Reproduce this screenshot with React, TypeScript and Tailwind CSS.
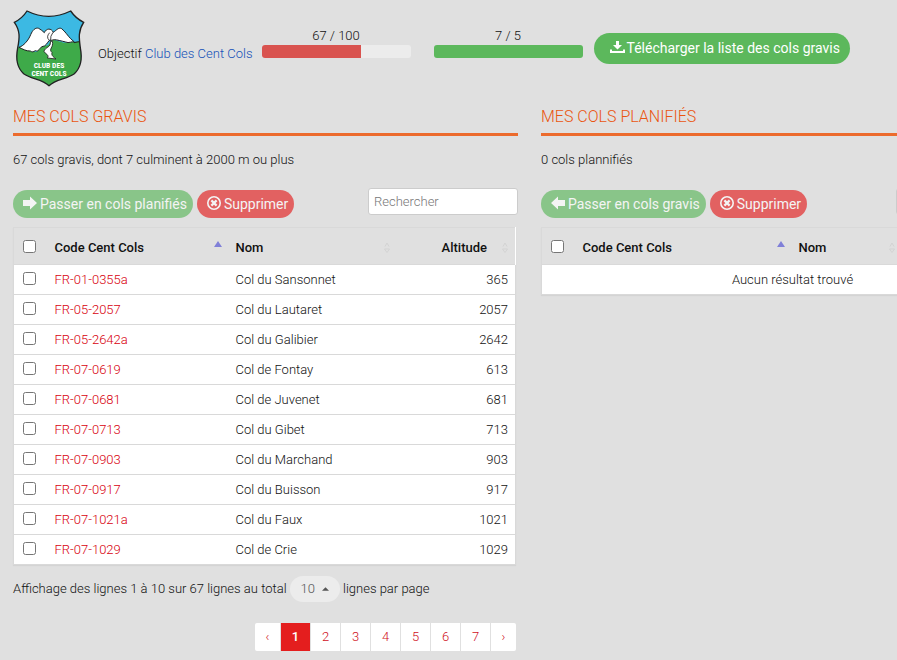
import React, { useState } from 'react';

interface Col {
  code: string;
  name: string;
  altitude: number;
}

const CLIMBED: Col[] = [
  { code: 'FR-01-0355a', name: 'Col du Sansonnet', altitude: 365 },
  { code: 'FR-05-2057', name: 'Col du Lautaret', altitude: 2057 },
  { code: 'FR-05-2642a', name: 'Col du Galibier', altitude: 2642 },
  { code: 'FR-07-0619', name: 'Col de Fontay', altitude: 613 },
  { code: 'FR-07-0681', name: 'Col de Juvenet', altitude: 681 },
  { code: 'FR-07-0713', name: 'Col du Gibet', altitude: 713 },
  { code: 'FR-07-0903', name: 'Col du Marchand', altitude: 903 },
  { code: 'FR-07-0917', name: 'Col du Buisson', altitude: 917 },
  { code: 'FR-07-1021a', name: 'Col du Faux', altitude: 1021 },
  { code: 'FR-07-1029', name: 'Col de Crie', altitude: 1029 },
];

const Logo = () => (
  <svg viewBox="24 20 216 231" className="h-[77px] w-[72px] shrink-0" role="img" aria-label="Club des Cent Cols">
    <defs>
      <clipPath id="shield">
        <path d="M66 23Q131 55 197 23Q212 45 236 57C219 82 222 104 226 134C233 170 227 194 208 211C185 228 153 226 132 247C111 226 79 228 56 211C37 194 31 170 38 134C44 104 46 82 28 57Q52 45 66 23Z" />
      </clipPath>
    </defs>
    <g clipPath="url(#shield)">
      <path d="M20 15H245V255H20Z" fill="#3cb9e3" />
      <path d="M36 133L58 125L74 143L95 146L107 131L130 125L140 108L176 118L205 116L245 112V255H20Z" fill="#3eaa49" />
      <path
        d="M42 132C55 128 70 112 77 94C83 80 91 72 101 75C108 79 113 83 118 88C124 74 139 74 145 87C154 81 161 71 170 76C181 85 188 97 197 106L208 116C200 113 192 121 182 116C169 113 155 109 148 109C142 111 137 111 133 111C126 118 124 129 111 130C104 133 101 147 91 142C84 146 82 147 76 143C64 144 53 137 42 132Z"
        fill="#fff"
        stroke="#222"
        strokeWidth="3"
      />
      <path d="M134 88Q122 101 133 111M144 87Q135 99 137 110" fill="none" stroke="#222" strokeWidth="2.5" />
      <path d="M136 114C140 132 119 132 117 144C119 151 135 155 127 164L153 167C142 159 139 155 141 147C129 138 147 132 142 114Z" fill="#fff" stroke="#222" strokeWidth="2.5" />
      <path d="M207 118Q219 115 232 114" fill="none" stroke="#222" strokeWidth="3" />
    </g>
    <path
      d="M66 23Q131 55 197 23Q212 45 236 57C219 82 222 104 226 134C233 170 227 194 208 211C185 228 153 226 132 247C111 226 79 228 56 211C37 194 31 170 38 134C44 104 46 82 28 57Q52 45 66 23Z"
      fill="none"
      stroke="#222"
      strokeWidth="4"
    />
    <g fill="#fff" textAnchor="middle" fontWeight="700" fontSize="23" fontFamily="'Liberation Sans Narrow', 'Roboto Condensed', Roboto, sans-serif">
      <text x="132" y="193">CLUB DES</text>
      <text x="132" y="217">CENT COLS</text>
    </g>
  </svg>
);

const SaveIcon = () => (
  <svg viewBox="0 0 15 14" className="mb-[3px] h-[14px] w-[15px]" fill="currentColor" aria-hidden="true">
    <path d="M6 1h3v4h3L7.500 9.500 3 5h3zM0 9.500h2V11h11V9.500h2V13H0z" />
  </svg>
);

const ArrowIcon = ({ left = false }: { left?: boolean }) => (
  <svg viewBox="0 0 14 14" className="mb-[2px] h-[14px] w-[14px]" fill="currentColor" aria-hidden="true">
    <path d={left ? 'M0 7L7 0.500V4h7v6H7v3.500z' : 'M14 7L7 0.500V4H0v6h7v3.500z'} />
  </svg>
);

const RemoveIcon = () => (
  <svg viewBox="0 0 14 14" className="mb-[2px] h-[14px] w-[14px]" fill="none" stroke="currentColor" aria-hidden="true">
    <circle cx="7" cy="7" r="6.200" strokeWidth="1.600" />
    <path d="M4.400 4.400l5.200 5.200M9.600 4.400l-5.200 5.200" strokeWidth="2.200" />
  </svg>
);

const SortIcon = () => (
  <svg viewBox="0 0 6 12" className="h-[12px] w-[6px]" fill="none" stroke="#d3d3d3" aria-hidden="true">
    <path d="M1 4.500L3 1l2 3.500M0.500 7h5L3 10.500z" strokeWidth="1" />
  </svg>
);

const AscIcon = () => (
  <svg viewBox="0 0 8 6" className="mb-[7px] h-[6px] w-[8px]" fill="#8080d8" aria-hidden="true">
    <path d="M4 0l4 6H0z" />
  </svg>
);

interface ProgressProps {
  label: string;
  value: number;
  barClass: string;
}

const Progress: React.FC<ProgressProps> = ({ label, value, barClass }) => (
  <div className="w-[149px] text-center">
    <div className="leading-[18px]">{label}</div>
    <div role="progressbar" aria-label={label} aria-valuenow={value} className="h-[13px] overflow-hidden rounded-[3px] bg-[#ececec]">
      <div className={`h-full ${barClass}`} style={{ width: `${value}%` }} />
    </div>
  </div>
);

interface PanelProps {
  title: string;
  summary: string;
  moveLabel: string;
  moveLeft?: boolean;
  cols: Col[];
  children?: React.ReactNode;
}

const CHECKBOX = 'block h-[13px] w-[13px]';
const PILL = 'flex h-[28px] items-center gap-[3px] rounded-full pr-[6px] pl-[10px] text-[14px] font-normal text-white opacity-65';

const Panel: React.FC<PanelProps> = ({ title, summary, moveLabel, moveLeft, cols, children }) => {
  const [search, setSearch] = useState('');
  const empty = cols.length === 0;

  return (
    <section>
      <h2 className="border-b-[3px] border-[#ec6b2d] pb-[6px] text-[16px] leading-[20px] text-[#ea5510] uppercase">{title}</h2>
      <p className="mt-[14px] leading-[20px]">{summary}</p>

      <div className="mt-[18px] flex items-start justify-between">
        <div className="flex gap-1 pt-[2px]">
          <button type="button" disabled className={`${PILL} bg-[#5cb85c]`}>
            <ArrowIcon left={moveLeft} />
            {moveLabel}
          </button>
          <button type="button" disabled className={`${PILL} bg-[#e41e1e]`}>
            <RemoveIcon />
            Supprimer
          </button>
        </div>
        <input
          type="text"
          aria-label="Rechercher"
          placeholder="Rechercher"
          value={search}
          onChange={(e) => setSearch(e.target.value)}
          className="h-[27px] w-[150px] rounded-[3px] border border-[#ccc] bg-white px-[5px] placeholder-[#777]"
        />
      </div>

      <div className="mt-[9px] mr-[2px]">
        <table className="w-full table-fixed border border-[#d9d9d9] shadow-[0_1px_1px_rgba(0,0,0,0.05)]">
          <colgroup>
            <col className="w-[34px]" />
            <col className={empty ? 'w-[216px]' : 'w-[181px]'} />
            <col className={empty ? 'w-[110px]' : 'w-[168px]'} />
            <col />
          </colgroup>
          <thead>
            <tr className="h-[37px] border-b border-[#d9d9d9] text-left">
              <th className="pl-[9px]">
                <input type="checkbox" aria-label="Tout sélectionner" className={CHECKBOX} />
              </th>
              <th className="px-[7px] pt-[3px] font-medium">
                <div className="flex items-center justify-between">
                  Code Cent Cols
                  <AscIcon />
                </div>
              </th>
              <th className="px-[7px] pt-[3px] font-medium">
                <div className="flex items-center justify-between">
                  Nom
                  <SortIcon />
                </div>
              </th>
              <th className="border-r border-white px-[7px] pt-[3px] font-medium">
                <div className="flex items-center justify-end gap-[15px]">
                  Altitude
                  <SortIcon />
                </div>
              </th>
            </tr>
          </thead>
          <tbody className="bg-white">
            {empty && (
              <tr className="h-[30px]">
                <td colSpan={4} className="text-center">
                  Aucun résultat trouvé
                </td>
              </tr>
            )}
            {cols.map((col) => (
              <tr key={col.code} className="h-[30px] border-b border-[#d9d9d9]">
                <td className="pb-[2px] pl-[9px]">
                  <input type="checkbox" aria-label={col.name} className={CHECKBOX} />
                </td>
                <td className="px-[7px]">
                  <a href={`#${col.code}`} className="text-[#d8000c]">
                    {col.code}
                  </a>
                </td>
                <td className="px-[7px]">{col.name}</td>
                <td className="px-[7px] text-right">{col.altitude}</td>
              </tr>
            ))}
          </tbody>
        </table>
        {children}
      </div>
    </section>
  );
};

const PAGES = ['1', '2', '3', '4', '5', '6', '7'];

const Pagination = () => (
  <nav aria-label="Pagination" className="mt-[21px] flex h-[28px] justify-end gap-px text-[#d0101c]">
    <a href="#prev" aria-label="Page précédente" className="flex w-[25px] items-center justify-center rounded-l-[2px] bg-white">
      ‹
    </a>
    {PAGES.map((page) => (
      <a
        key={page}
        href={`#page-${page}`}
        className={`flex w-[29px] items-center justify-center ${page === '1' ? 'bg-[#e41e1e] font-medium text-white' : 'bg-white'}`}
      >
        {page}
      </a>
    ))}
    <a href="#next" aria-label="Page suivante" className="flex w-[25px] items-center justify-center rounded-r-[2px] bg-white">
      ›
    </a>
  </nav>
);

export default function App() {
  return (
    <div className="min-h-screen overflow-x-hidden bg-[#e0e0e0] font-['Roboto',sans-serif] text-[13px] font-light text-[#111]">
      <div className="min-w-[1059px] px-[13px] pt-[10px]">
        <header className="flex items-start">
          <Logo />
          <p className="mt-[34px] ml-[13px] leading-[20px]">
            Objectif{' '}
            <a href="#club" className="text-[#1450b8]">
              Club des Cent Cols
            </a>
          </p>
          <div className="mt-[17px] ml-[9px] flex gap-[23px]">
            <Progress label="67 / 100" value={67} barClass="bg-[#d9534f]" />
            <Progress label="7 / 5" value={100} barClass="bg-[#5cb85c]" />
          </div>
          <button type="button" className="mt-[23px] ml-[11px] flex h-[31px] items-center gap-[2px] rounded-full bg-[#5cb85c] pr-[10px] pl-4 text-[14px] font-normal text-white">
            <SaveIcon />
            Télécharger la liste des cols gravis
          </button>
        </header>

        <main className="mt-5 grid grid-cols-2 gap-[23px]">
          <Panel title="Mes cols gravis" summary="67 cols gravis, dont 7 culminent à 2000 m ou plus" moveLabel="Passer en cols planifiés" cols={CLIMBED}>
            <div className="mt-[11px] flex items-center gap-[3px]">
              <span>Affichage des lignes 1 à 10 sur 67 lignes au total</span>
              <button type="button" className="flex h-[26px] items-center gap-[7px] rounded-full bg-[#ececec] px-[11px] text-[#555]">
                10
                <svg viewBox="0 0 8 4" className="h-[4px] w-[7px]" fill="#555" aria-hidden="true">
                  <path d="M4 0l4 4H0z" />
                </svg>
              </button>
              <span>lignes par page</span>
            </div>
            <Pagination />
          </Panel>
          <Panel title="Mes cols planifiés" summary="0 cols plannifiés" moveLabel="Passer en cols gravis" moveLeft cols={[]} />
        </main>
      </div>
    </div>
  );
}
